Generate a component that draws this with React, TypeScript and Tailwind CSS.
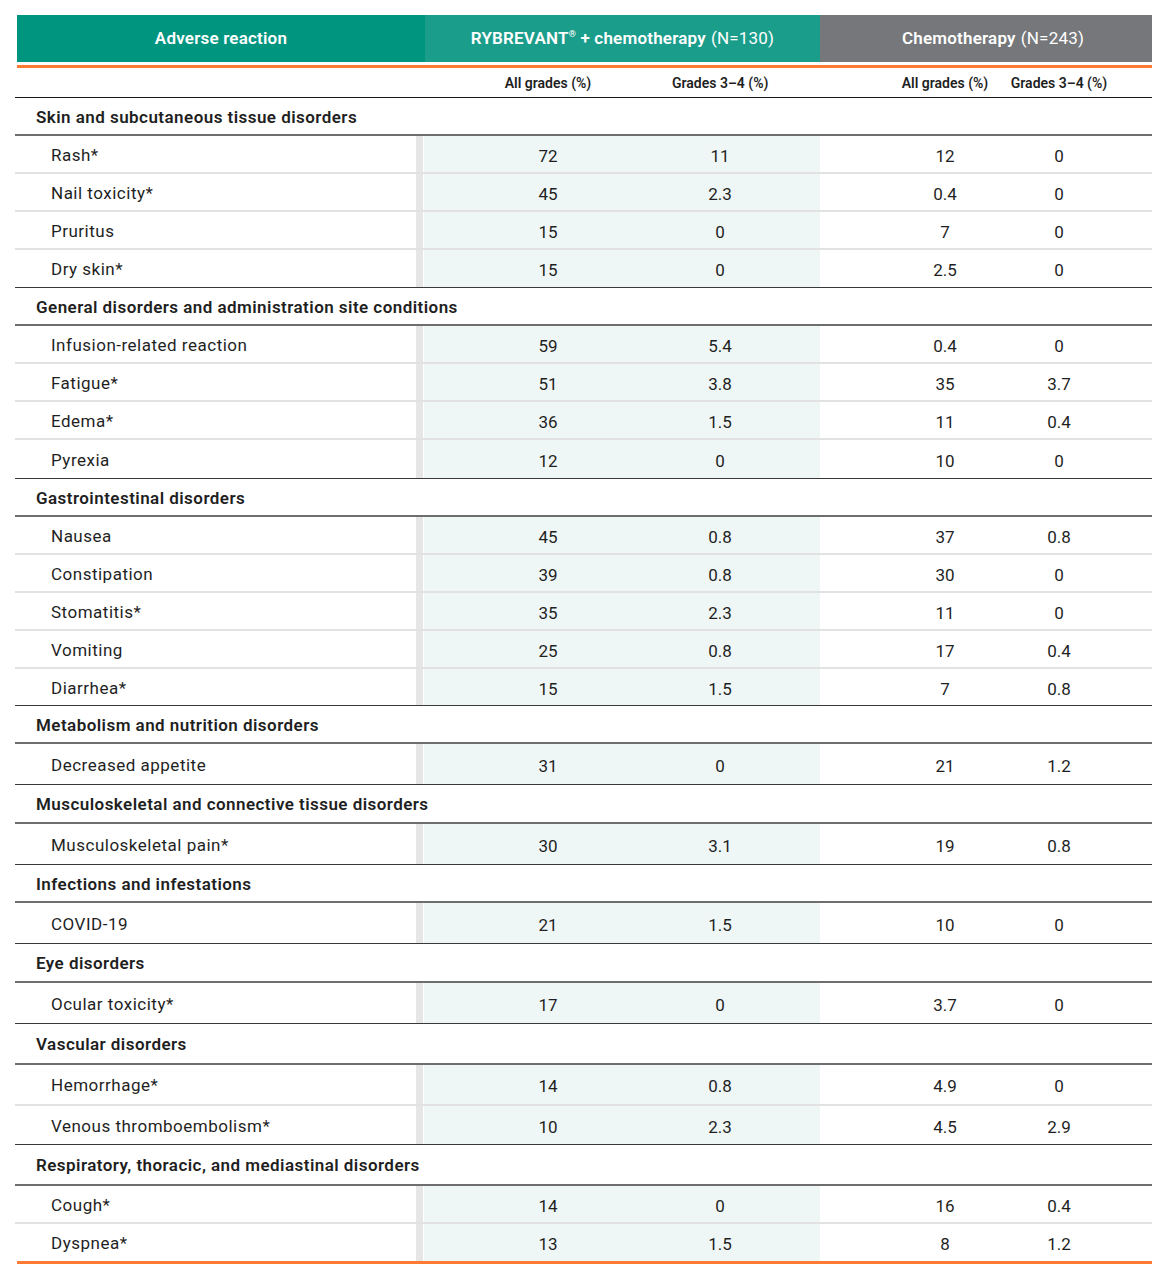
import React from "react";

type Row = { label: string; a: string; b: string; c: string; d: string; h: number };
type Section = { title: string; h: number; rows: Row[] };

const sections: Section[] = [
  {
    title: "Skin and subcutaneous tissue disorders",
    h: 38,
    rows: [
      { label: "Rash*", a: "72", b: "11", c: "12", d: "0", h: 38 },
      { label: "Nail toxicity*", a: "45", b: "2.3", c: "0.4", d: "0", h: 38 },
      { label: "Pruritus", a: "15", b: "0", c: "7", d: "0", h: 38 },
      { label: "Dry skin*", a: "15", b: "0", c: "2.5", d: "0", h: 38 },
    ],
  },
  {
    title: "General disorders and administration site conditions",
    h: 38,
    rows: [
      { label: "Infusion-related reaction", a: "59", b: "5.4", c: "0.4", d: "0", h: 38 },
      { label: "Fatigue*", a: "51", b: "3.8", c: "35", d: "3.7", h: 38 },
      { label: "Edema*", a: "36", b: "1.5", c: "11", d: "0.4", h: 38 },
      { label: "Pyrexia", a: "12", b: "0", c: "10", d: "0", h: 39 },
    ],
  },
  {
    title: "Gastrointestinal disorders",
    h: 38,
    rows: [
      { label: "Nausea", a: "45", b: "0.8", c: "37", d: "0.8", h: 38 },
      { label: "Constipation", a: "39", b: "0.8", c: "30", d: "0", h: 38 },
      { label: "Stomatitis*", a: "35", b: "2.3", c: "11", d: "0", h: 38 },
      { label: "Vomiting", a: "25", b: "0.8", c: "17", d: "0.4", h: 38 },
      { label: "Diarrhea*", a: "15", b: "1.5", c: "7", d: "0.8", h: 37 },
    ],
  },
  {
    title: "Metabolism and nutrition disorders",
    h: 38,
    rows: [{ label: "Decreased appetite", a: "31", b: "0", c: "21", d: "1.2", h: 41 }],
  },
  {
    title: "Musculoskeletal and connective tissue disorders",
    h: 39,
    rows: [{ label: "Musculoskeletal pain*", a: "30", b: "3.1", c: "19", d: "0.8", h: 41 }],
  },
  {
    title: "Infections and infestations",
    h: 38,
    rows: [{ label: "COVID-19", a: "21", b: "1.5", c: "10", d: "0", h: 41 }],
  },
  {
    title: "Eye disorders",
    h: 39,
    rows: [{ label: "Ocular toxicity*", a: "17", b: "0", c: "3.7", d: "0", h: 41 }],
  },
  {
    title: "Vascular disorders",
    h: 41,
    rows: [
      { label: "Hemorrhage*", a: "14", b: "0.8", c: "4.9", d: "0", h: 41 },
      { label: "Venous thromboembolism*", a: "10", b: "2.3", c: "4.5", d: "2.9", h: 39 },
    ],
  },
  {
    title: "Respiratory, thoracic, and mediastinal disorders",
    h: 41,
    rows: [
      { label: "Cough*", a: "14", b: "0", c: "16", d: "0.4", h: 38 },
      { label: "Dyspnea*", a: "13", b: "1.5", c: "8", d: "1.2", h: 37 },
    ],
  },
];

const DataRow = ({ row, last, end }: { row: Row; last: boolean; end: boolean }) => (
  <div
    className={`flex ${
      end ? (last ? "" : "border-b border-[#3a3a3a]") : "border-b-2 border-[#e2e2e2]"
    }`}
    style={{ height: row.h }}
  >
    <div className="w-[401px] flex items-center pl-[36px] pt-[3px] tracking-[0.5px]">{row.label}</div>
    <div className="w-[7px] bg-[#e6e6e6]" />
    <div className="w-[1px]" />
    <div className="w-[396px] bg-[#eff7f6] flex items-center pt-[5px]">
      <span className="w-[248px] text-center">{row.a}</span>
      <span className="w-[96px] text-center">{row.b}</span>
    </div>
    <div className="w-[332px] flex items-center pl-[70px] pt-[5px]">
      <span className="w-[110px] text-center">{row.c}</span>
      <span className="w-[118px] text-center">{row.d}</span>
    </div>
  </div>
);

export default function App() {
  return (
    <div className="bg-white min-h-[1271px] pt-[15px] pl-[15px] text-[17px] text-[#1f1f1f] font-['Roboto','Liberation_Sans',sans-serif]">
      <div className="w-[1137px]">
        {/* column header */}
        <div className="flex ml-[2px] h-[47px] text-white text-[17px] pt-[3px]">
          <div className="w-[408px] bg-[#00957f] -mt-[3px] flex items-center justify-center font-semibold tracking-[0.2px]">
            Adverse reaction
          </div>
          <div className="w-[395px] bg-[#1b9d8b] -mt-[3px] flex items-center justify-center tracking-[0.2px]">
            <span className="font-semibold">
              RYBREVANT<sup className="text-[9px] -top-[7px]">®</sup> + chemotherapy
            </span>
            <span className="ml-[5px]">(N=130)</span>
          </div>
          <div className="w-[332px] bg-[#75777a] -mt-[3px] flex items-center justify-center pl-[14px] tracking-[0.2px]">
            <span className="font-semibold">Chemotherapy</span>
            <span className="ml-[5px]">(N=243)</span>
          </div>
        </div>
        <div className="ml-[2px] mt-[3px] h-[3px] bg-[#ff7a33]" />
        <div className="flex h-[30px] border-b border-[#1a1a1a] text-[14px] font-semibold pt-[2px]">
          <div className="w-[409px]" />
          <div className="w-[396px] flex items-center">
            <span className="w-[248px] text-center">All grades (%)</span>
            <span className="w-[96px] text-center whitespace-nowrap">Grades 3–4 (%)</span>
          </div>
          <div className="w-[332px] flex items-center pl-[70px]">
            <span className="w-[110px] text-center whitespace-nowrap">All grades (%)</span>
            <span className="w-[118px] text-center whitespace-nowrap">Grades 3–4 (%)</span>
          </div>
        </div>

        {sections.map((s, si) => (
          <div key={s.title}>
            <div
              className="flex items-center pl-[21px] pt-[3px] font-semibold tracking-[0.45px] border-b-2 border-[#6e6e6e]"
              style={{ height: s.h }}
            >
              {s.title}
            </div>
            {s.rows.map((r, ri) => (
              <DataRow
                key={r.label}
                row={r}
                end={ri === s.rows.length - 1}
                last={si === sections.length - 1 && ri === s.rows.length - 1}
              />
            ))}
          </div>
        ))}
        <div className="ml-[2px] h-[3px] bg-[#ff7a33]" />
      </div>
    </div>
  );
}
